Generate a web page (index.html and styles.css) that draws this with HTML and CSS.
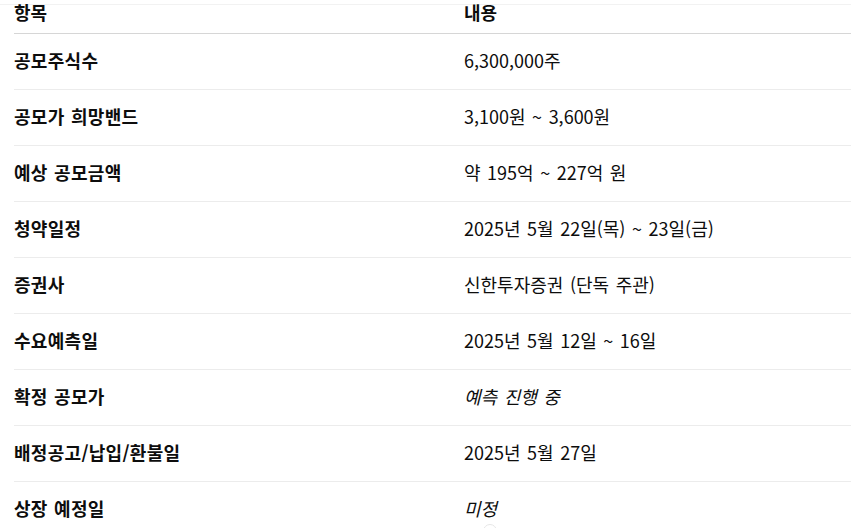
FILE: index.html
```html
<!DOCTYPE html>
<html lang="ko">
<head>
<meta charset="utf-8">
<title>공모 정보</title>
<link rel="stylesheet" href="styles.css">
</head>
<body>
<div class="wrap">
  <table class="info">
    <colgroup><col class="c1"><col class="c2"></colgroup>
    <thead>
      <tr><th>항목</th><th>내용</th></tr>
    </thead>
    <tbody>
      <tr><td>공모주식수</td><td>6,300,000주</td></tr>
      <tr><td>공모가 희망밴드</td><td>3,100원 ~ 3,600원</td></tr>
      <tr><td>예상 공모금액</td><td>약 195억 ~ 227억 원</td></tr>
      <tr><td>청약일정</td><td>2025년 5월 22일(목) ~ 23일(금)</td></tr>
      <tr><td>증권사</td><td>신한투자증권 (단독 주관)</td></tr>
      <tr><td>수요예측일</td><td>2025년 5월 12일 ~ 16일</td></tr>
      <tr><td>확정 공모가</td><td><em>예측 진행 중</em></td></tr>
      <tr><td>배정공고/납입/환불일</td><td>2025년 5월 27일</td></tr>
      <tr><td>상장 예정일</td><td><em>미정</em></td></tr>
    </tbody>
  </table>
</div>
<div class="scroll-btn"></div>
</body>
</html>
```
FILE: styles.css
```css
html, body {
  margin: 0;
  padding: 0;
  background: #ffffff;
  overflow: hidden;
}
body {
  font-family: "Noto Sans CJK KR", sans-serif;
  font-size: 18px;
  color: #0d0d0d;
}
.wrap {
  margin-top: 4px;
  border-top: 1px solid #f2f2f2;
  padding-left: 14px;
}
.info {
  border-collapse: collapse;
  table-layout: fixed;
  width: 837px;
}
.info .c1 { width: 450px; }
.info th {
  text-align: left;
  font-weight: 700;
  line-height: 14px;
  padding: 0 0 14px 0;
  border-bottom: 1px solid #d6d6d6;
}
.info td {
  line-height: 23px;
  padding: 15px 0 17px;
  border-bottom: 1px solid #ececec;
  white-space: nowrap;
  word-spacing: 1.5px;
}
.info td:first-child {
  font-weight: 700;
  letter-spacing: 0.3px;
  word-spacing: 1px;
}
.info em {
  font-style: italic;
}
.scroll-btn {
  position: fixed;
  left: 483px;
  top: 524px;
  width: 12px;
  height: 12px;
  border-radius: 50%;
  background: #fff;
  border: 1px solid #e6e6e6;
}
```
